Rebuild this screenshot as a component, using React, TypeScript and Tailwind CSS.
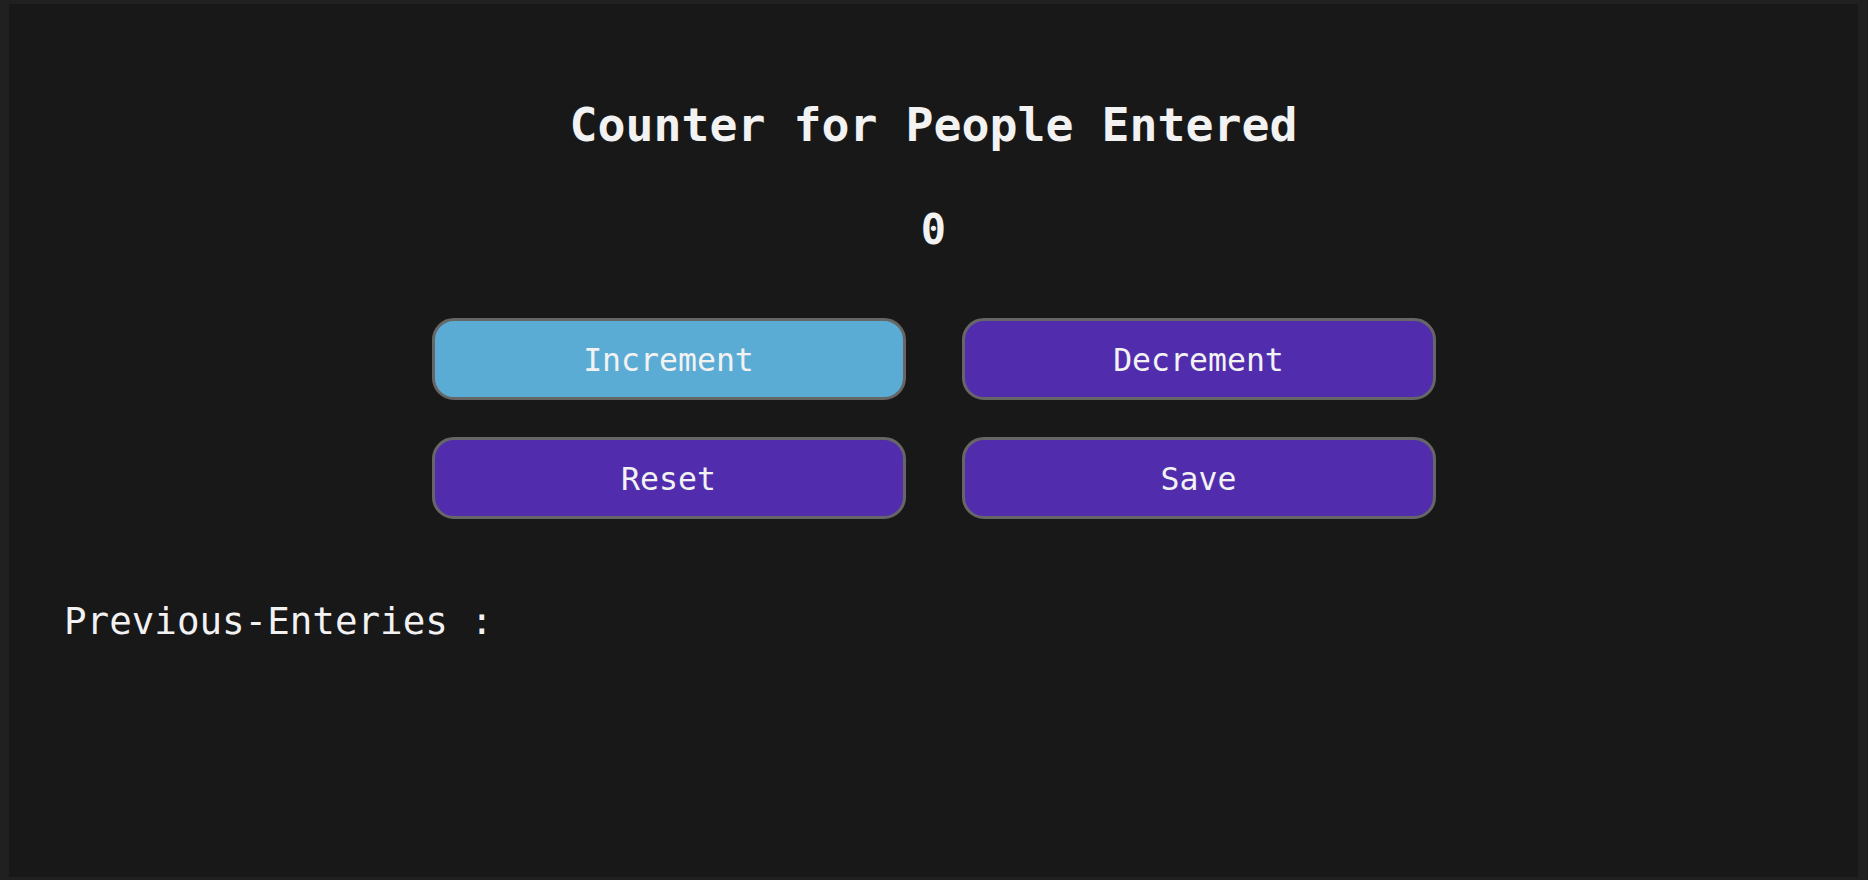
import React, { useState } from 'react';

const mono = { fontFamily: '"DejaVu Sans Mono", "Liberation Mono", monospace' };

const App: React.FC = () => {
  const [count, setCount] = useState(0);
  const [entries, setEntries] = useState<number[]>([]);

  const btn =
    'h-[82px] pt-[3px] rounded-[22px] border-[3px] border-[#666666] text-[31.5px] text-[#f2f2f2] cursor-pointer';

  return (
    <div className="h-screen bg-[#202020] pt-[4px] pl-[9px] pr-[10px] pb-[3px]" style={mono}>
      <div className="h-full bg-[#181818] flex flex-col">
        <h1 className="mt-[94px] text-center text-[46.5px] leading-[55px] font-bold text-[#f2f2f2]">
          Counter for People Entered
        </h1>
        <h2 className="mt-[52px] text-center text-[42px] leading-[49px] font-bold text-[#f2f2f2]">
          {count}
        </h2>

        <div className="mt-[64px] grid grid-cols-[474px_474px] justify-center gap-x-[56px] gap-y-[37px]">
          <button className={`${btn} bg-[#5bacd5]`} onClick={() => setCount(count + 1)}>
            Increment
          </button>
          <button className={`${btn} bg-[#512dae]`} onClick={() => setCount(Math.max(0, count - 1))}>
            Decrement
          </button>
          <button className={`${btn} bg-[#512dae]`} onClick={() => setCount(0)}>
            Reset
          </button>
          <button
            className={`${btn} bg-[#512dae]`}
            onClick={() => {
              setEntries([...entries, count]);
              setCount(0);
            }}
          >
            Save
          </button>
        </div>

        <p className="mt-[81px] pl-[55px] text-[37.5px] leading-[43px] text-[#f2f2f2]">
          Previous-Enteries : {entries.join(' - ')}
        </p>
      </div>
    </div>
  );
};

export default App;
